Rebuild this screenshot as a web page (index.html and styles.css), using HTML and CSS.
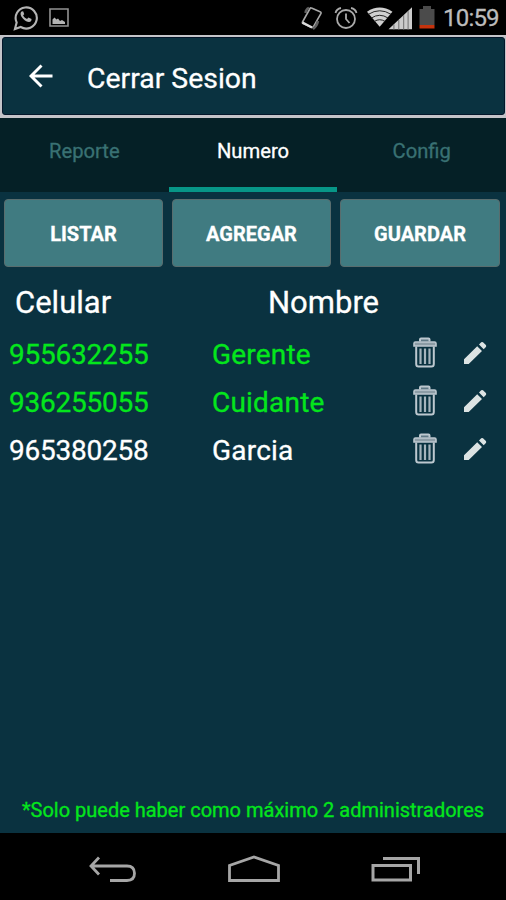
FILE: index.html
```html
<!DOCTYPE html>
<html lang="es">
<head>
    <meta charset="UTF-8">
    <meta name="viewport" content="width=device-width, initial-scale=1.0">
    <title>Numero</title>
    <link rel="stylesheet" href="styles.css">
</head>
<body>
    <svg class="defs" width="0" height="0">
        <symbol id="trash" viewBox="0 0 24 31">
            <path d="M7 4.500V2.500Q7 1.500 8 1.500H15.500Q16.500 1.500 16.500 2.500V4.500" fill="#5f7885" stroke="#bdc8cf" stroke-width="2"/>
            <path d="M1 9V6.500Q1 5 2.500 5H21.500Q23 5 23 6.500V9Z" fill="#8c9ca5" stroke="#bdc8cf" stroke-width="1.600"/>
            <path d="M3.200 9.500V27Q3.200 29.500 5.500 29.500H18.500Q20.800 29.500 20.800 27V9.500" fill="none" stroke="#bdc8cf" stroke-width="2"/>
            <path d="M7.500 11.500V27M12 11.500V27M16.500 11.500V27" stroke="#a5b4bc" stroke-width="2.200"/>
        </symbol>
        <symbol id="pencil" viewBox="0 0 24 24">
            <path d="M1 18.200V23H5.700L19 9.900L14.200 5.200ZM22.900 5.900Q23.600 5 22.900 4.100L20 1.300Q19.100 .6 18.200 1.300L16 3.500L20.700 8.200Z" fill="#dce3e3"/>
        </symbol>
    </svg>

    <div class="status">
        <svg class="whatsapp" width="25" height="27" viewBox="0 0 26 28" fill="none" stroke="#b4b4b4" stroke-width="2.200">
            <path d="M2 26L3.800 19.200A11 11 0 1 1 8 23.900Z"/>
            <path d="M9.400 7.500C7 9 7.500 12 10.500 15.300C14 19 17.500 19.700 19 17.500L19.300 15.500L16 14L14.600 15.600C12.500 14.800 11.300 13.400 10.500 11.700L11.700 10.500L10.700 7.700Z" fill="#b4b4b4" stroke="none"/>
        </svg>
        <svg class="picture" width="20" height="19" viewBox="0 0 20 19">
            <path d="M1 1H19V18H1Z" fill="none" stroke="#929292" stroke-width="1.600"/>
            <path d="M3.500 16V11.500L5.500 9.500L7.500 11.500L9 10.500L11 13L13 12L16 14V16Z" fill="#b4b4b4"/>
        </svg>
        <span class="spacer"></span>
        <svg class="rotate" width="22" height="26" viewBox="0 0 22 26" fill="none" stroke="#a8a8a8" stroke-width="1.600">
            <path d="M1.500 17L9 3.500Q9.500 2.600 10.500 3.100L18.500 6.500Q20.500 7.200 20 8.500L12.500 21.500Q11.900 22.900 11 22.400L2 18.500Q1 18 1.500 17Z"/>
            <path d="M1.500 17.500L11 22.500" stroke="#dddddd" stroke-width="2.400"/>
            <path d="M4.500 8Q5 4 8 3M17 16Q16 21 12 24" stroke="#606060" stroke-width="2.500"/>
        </svg>
        <svg class="alarm" width="24" height="24" viewBox="0 0 24 24" fill="none" stroke="#aaaaaa" stroke-width="1.800">
            <circle cx="12" cy="13" r="9"/>
            <path d="M12 7.500V13L15.500 17M1.500 7Q2.500 3 7 2M22.500 7Q21.500 3 17 2"/>
        </svg>
        <svg class="signal" width="47" height="24" viewBox="0 0 48 24">
            <path d="M14 21L1 5.500Q14 -3 27 5.500Z" fill="#d0d0d0"/>
            <path d="M2.500 8.200Q14 1 25.500 8.200M5.500 12Q14 6.500 22.500 12M8.500 15.500Q14 12 19.500 15.500" fill="none" stroke="#222" stroke-width="1"/>
            <path d="M23 23.500L47 1V23.500Z" fill="#cccccc"/>
            <path d="M28.500 18.500V24M33.500 14V24M38.500 9V24M43 5V24" stroke="#6d6d6d" stroke-width="1"/>
        </svg>
        <svg class="battery" width="16" height="23" viewBox="0 0 16 23">
            <path d="M4 0H12V3H15.500V19H.5V3H4Z" fill="#4b4b4b"/>
            <path d="M.5 19H15.500V22.500H.5Z" fill="#c5330d"/>
        </svg>
        <span class="clock">10:59</span>
    </div>

    <div class="appbar">
        <div class="panel">
            <svg class="back" width="24" height="24" viewBox="0 0 24 24" fill="none" stroke="#fff" stroke-width="2.900">
                <path d="M23.500 12H2.500M12.500 1.500L2 12L12.500 22.500"/>
            </svg>
            <span class="title">Cerrar Sesion</span>
        </div>
    </div>

    <div class="tabs">
        <div class="tab">Reporte</div>
        <div class="tab active">Numero</div>
        <div class="tab">Config</div>
    </div>

    <div class="content">
        <div class="buttons">
            <button>LISTAR</button>
            <button>AGREGAR</button>
            <button>GUARDAR</button>
        </div>
        <div class="heading">
            <span>Celular</span>
            <span>Nombre</span>
        </div>
        <div class="row admin">
            <span class="number">955632255</span>
            <span class="name">Gerente</span>
            <svg class="trash"><use href="#trash"/></svg>
            <svg class="pencil"><use href="#pencil"/></svg>
        </div>
        <div class="row admin">
            <span class="number">936255055</span>
            <span class="name">Cuidante</span>
            <svg class="trash"><use href="#trash"/></svg>
            <svg class="pencil"><use href="#pencil"/></svg>
        </div>
        <div class="row">
            <span class="number">965380258</span>
            <span class="name">Garcia</span>
            <svg class="trash"><use href="#trash"/></svg>
            <svg class="pencil"><use href="#pencil"/></svg>
        </div>
        <div class="note">*Solo puede haber como máximo 2 administradores</div>
    </div>

    <div class="navbar">
        <svg width="48" height="27" viewBox="0 0 48 27" fill="none" stroke="#a6a6a6" stroke-width="2.800">
            <path d="M21 24.500H38Q45.500 24.500 45.500 17.300Q45.500 10 38 10H2M10 1.500L2 10L10 18.500"/>
        </svg>
        <svg width="54" height="28" viewBox="0 0 54 28" fill="none" stroke="#a6a6a6" stroke-width="2.800">
            <path d="M2.500 25.500V10.500L27 2L51.500 10.500V25.500Z"/>
        </svg>
        <svg width="50" height="26" viewBox="0 0 50 26" fill="none" stroke="#a6a6a6" stroke-width="3">
            <path d="M2 9.500H39.500V24H2ZM12 2.500H47.500V18"/>
        </svg>
    </div>
</body>
</html>
```
FILE: styles.css
```css
body {
    font-family: Roboto, "Liberation Sans", sans-serif;
    margin: 0;
    height: 900px;
    display: flex;
    flex-direction: column;
    overflow: hidden;
    background-color: #0a3240;
    color: #fff;
    -webkit-text-stroke: 0.3px;
}
svg {
    display: block;
    flex: none;
}
.defs {
    position: absolute;
}
.status {
    height: 35px;
    flex: none;
    display: flex;
    align-items: center;
    padding: 0 8px 0 13px;
    background-color: #000;
}
.picture {
    margin-left: 11px;
}
.spacer {
    flex: 1;
}
.alarm {
    margin-left: 11px;
}
.signal {
    margin-left: 8px;
}
.battery {
    margin-left: 6px;
}
.clock {
    width: 55px;
    margin-left: 8px;
    padding-top: 2px;
    font-size: 24px;
    line-height: 35px;
    letter-spacing: -0.8px;
    white-space: nowrap;
    color: #bcbcbc;
}
.appbar {
    flex: none;
    padding: 2px 1px 3px 2px;
    background-color: #c4c4c9;
}
.panel {
    height: 78px;
    box-sizing: border-box;
    display: flex;
    align-items: center;
    padding-left: 26px;
    border: 1px solid #04162a;
    border-radius: 3px;
    background-color: #0a3240;
}
.title {
    margin-left: 34px;
    padding-top: 4px;
    font-size: 28.4px;
}
.tabs {
    height: 74px;
    flex: none;
    display: flex;
    background-color: #052026;
}
.tab {
    flex: 1;
    box-sizing: border-box;
    padding-top: 19px;
    border-bottom: 5px solid transparent;
    font-size: 20.2px;
    line-height: 28px;
    text-align: center;
    color: #397173;
}
.tab.active {
    color: #fff;
    border-bottom-color: #079687;
}
.content {
    flex: 1;
    display: flex;
    flex-direction: column;
}
.buttons {
    display: grid;
    grid-template-columns: 159px 159px 160px;
    column-gap: 9px;
    padding: 7px 0 0 4px;
}
button {
    height: 68px;
    padding: 1px 0 0;
    border: 1px solid #596d6e;
    border-radius: 4px;
    background-color: #407b81;
    color: #fff;
    font: bold 20px Roboto, "Liberation Sans", sans-serif;
}
.heading {
    height: 63px;
    display: grid;
    grid-template-columns: 253px 1fr;
    padding-left: 15px;
    font-size: 31px;
    line-height: 72px;
}
.row {
    height: 48px;
    display: flex;
    align-items: center;
    padding-left: 9px;
    font-size: 28px;
}
.admin,
.note {
    color: #04e61c;
}
.number {
    width: 203px;
    letter-spacing: -0.25px;
}
.name {
    width: 201px;
    letter-spacing: 0.2px;
}
.trash {
    width: 24px;
    height: 31px;
    margin-top: -4px;
}
.pencil {
    width: 24px;
    height: 24px;
    margin: -2px 0 0 26px;
}
.note {
    margin-top: auto;
    padding-bottom: 9px;
    font-size: 20px;
    line-height: 28px;
    text-align: center;
    white-space: nowrap;
}
.navbar {
    height: 67px;
    flex: none;
    box-sizing: border-box;
    display: flex;
    justify-content: space-between;
    align-items: center;
    padding: 5px 85px 0 89px;
    background-color: #000;
}
```
